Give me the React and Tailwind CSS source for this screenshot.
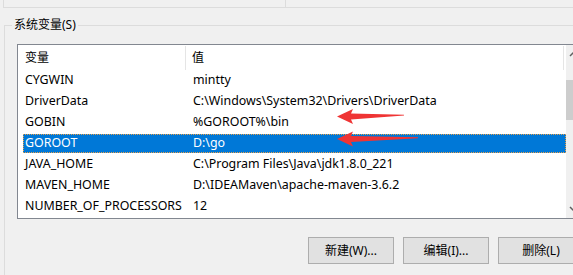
import React from "react";

const rows = [
  ["CYGWIN", "mintty"],
  ["DriverData", "C:\\Windows\\System32\\Drivers\\DriverData"],
  ["GOBIN", "%GOROOT%\\bin"],
  ["GOROOT", "D:\\go", true],
  ["JAVA_HOME", "C:\\Program Files\\Java\\jdk1.8.0_221"],
  ["MAVEN_HOME", "D:\\IDEAMaven\\apache-maven-3.6.2"],
  ["NUMBER_OF_PROCESSORS", "12"],
];

function Btn({ children }) {
  return (
    <div className="w-[86px] h-[27px] shrink-0 flex items-center justify-center bg-[#e1e1e1] border border-[#adadad] text-[12px] text-black">
      {children}
    </div>
  );
}

export default function App() {
  return (
    <div
      className="w-[573px] h-[275px] bg-[#f0f0f0] overflow-hidden relative text-black"
      style={{ fontFamily: '"Noto Sans", "Noto Sans CJK SC", sans-serif' }}
    >
      {/* bottom of the group above */}
      <div className="h-[8px] ml-[3px] border-l border-b border-[#dcdcdc]">
        <div className="w-[282px] h-full border-r border-[#dcdcdc]" />
      </div>

      {/* system variables group */}
      <div className="relative mt-[17px] ml-[4px] w-[600px] h-[300px] border-t border-l border-[#dcdcdc]">
        <div className="absolute left-[7px] top-[-10px] px-[2px] bg-[#f0f0f0] text-[12px] leading-[18px]">
          系统变量(S)
        </div>

        {/* list view */}
        <div className="mt-[18px] ml-[12px] w-[580px] h-[175px] border border-[#828790] bg-white flex">
          <div className="w-[548px] flex flex-col">
            <div className="h-[25px] flex items-center text-[12px]">
              <div className="w-[168px] h-[24px] pl-[7px] flex items-center border-r border-[#e5e5e5]">
                变量
              </div>
              <div className="w-[378px] h-[24px] pl-[6px] flex items-center border-r border-[#e5e5e5]">
                值
              </div>
            </div>
            {rows.map(([k, v, sel]) => (
              <div key={k} className="h-[21px] pl-[5px] flex">
                <div
                  className={
                    "flex-1 flex items-center text-[12.4px] whitespace-nowrap " +
                    (sel
                      ? "bg-[#0078d7] text-white border border-dotted border-[#e8a04a] my-[1px]"
                      : "border border-transparent my-[1px]")
                  }
                >
                  <div className="w-[169px] pl-[1px] shrink-0">{k}</div>
                  <div>{v}</div>
                </div>
              </div>
            ))}
          </div>
          {/* scrollbar */}
          <div className="w-[17px] h-full bg-[#f0f0f0] flex flex-col items-start">
            <div className="h-[18px] w-[17px] flex items-center pl-[3px]">
              <svg width="9" height="6" viewBox="0 0 9 6">
                <path d="M1 5 L4.5 1.5 L8 5" fill="none" stroke="#606060" strokeWidth="1.5" />
              </svg>
            </div>
            <div className="mt-[17px] h-[40px] w-[17px] bg-[#cdcdcd]" />
            <div className="flex-1" />
            <div className="h-[18px] w-[17px] flex items-center pl-[3px]">
              <svg width="9" height="6" viewBox="0 0 9 6">
                <path d="M1 1 L4.5 4.5 L8 1" fill="none" stroke="#606060" strokeWidth="1.5" />
              </svg>
            </div>
          </div>
        </div>

        {/* buttons */}
        <div className="mt-[18px] ml-[303px] flex gap-[9px]">
          <Btn>新建(W)...</Btn>
          <Btn>编辑(I)...</Btn>
          <Btn>删除(L)</Btn>
        </div>
      </div>

      {/* red arrows */}
      <svg className="absolute left-0 top-0" width="573" height="275" viewBox="0 0 573 275">
        <path
          d="M337 116.5 L353 109 L351 113.5 L404 114.8 L404 115.6 L351 119.5 L353 124 Z"
          fill="#ef3434"
        />
        <path
          d="M337 139 L353 131.5 L351 136 L418 137.3 L418 138.2 L351 142 L353 146.5 Z"
          fill="#ef3434"
        />
      </svg>
    </div>
  );
}
